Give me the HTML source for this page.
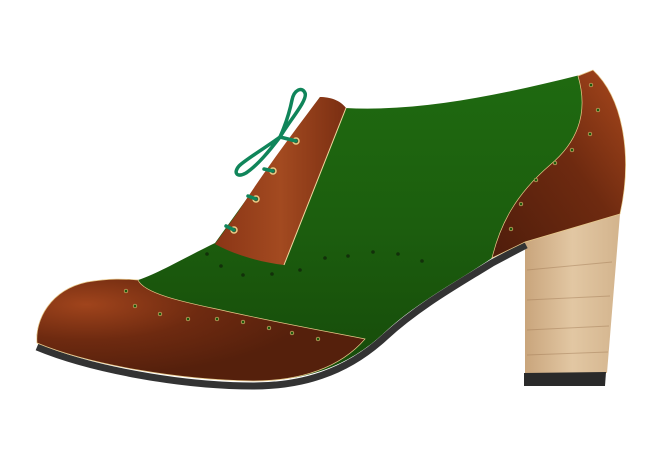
<!DOCTYPE html>
<html><head><meta charset="utf-8"><style>
html,body{margin:0;padding:0;background:#fff;width:660px;height:460px;overflow:hidden}
</style></head><body>
<svg width="660" height="460" viewBox="0 0 660 460" xmlns="http://www.w3.org/2000/svg">
<defs>
<linearGradient id="wood" x1="0" x2="1" y1="0" y2="0">
<stop offset="0" stop-color="#c9a57c"/><stop offset="0.5" stop-color="#e2c7a3"/><stop offset="1" stop-color="#d3b48d"/>
</linearGradient>
<linearGradient id="green" x1="0" x2="0" y1="0" y2="1">
<stop offset="0" stop-color="#1f6a10"/><stop offset="0.5" stop-color="#1c5e0e"/><stop offset="1" stop-color="#164a0a"/>
</linearGradient>
<radialGradient id="toe" cx="0.15" cy="0.25" r="0.7">
<stop offset="0" stop-color="#a0441c"/><stop offset="0.5" stop-color="#6e2a10"/><stop offset="1" stop-color="#55200c"/>
</radialGradient>
<linearGradient id="back" x1="1" x2="0" y1="0" y2="1">
<stop offset="0" stop-color="#a9481c"/><stop offset="0.45" stop-color="#6e2a10"/><stop offset="1" stop-color="#4f1d0b"/>
</linearGradient>
<linearGradient id="eye" x1="0" x2="1">
<stop offset="0" stop-color="#8a3516"/><stop offset="0.5" stop-color="#a34a20"/><stop offset="1" stop-color="#7a2e12"/>
</linearGradient>
</defs>
<!-- heel -->
<path d="M525,242 L620,214 L607,373 L525,373 Z" fill="url(#wood)"/>
<g stroke="#a07a55" stroke-width="1" opacity="0.45">
<line x1="527" y1="270" x2="612" y2="262"/><line x1="527" y1="300" x2="610" y2="296"/><line x1="527" y1="330" x2="609" y2="326"/><line x1="527" y1="355" x2="608" y2="352"/>
</g>
<path d="M524,373 L606,372 L605,386 L524,386 Z" fill="#2a2a2a"/>
<!-- sole -->
<path d="M37,347 C90,369 180,386 253,386 C300,386 345,374 385,337 C420,305 460,283 492,263 L526,245" fill="none" stroke="#333" stroke-width="7" stroke-linejoin="round"/>
<!-- upper green -->
<path d="M138,280 C155,275 190,255 215,243 L320,97 L345,108 C420,112 500,95 580,75 L593,70 C625,100 632,160 620,214 L525,242 L492,258 C460,280 420,300 385,332 C345,370 300,381 253,381 C180,380 90,365 37,343 C35,320 50,290 87,282 C110,278 125,279 138,280 Z" fill="url(#green)"/>
<!-- heel counter brown -->
<path d="M578,76 L593,70 C625,100 632,160 620,214 L525,242 L492,258 C500,225 515,195 550,165 C580,140 588,110 578,76 Z" fill="url(#back)" stroke="#e8c98a" stroke-width="0.7"/>
<!-- eyestay brown -->
<path d="M320,97 C330,97 340,100 346,108 L284,265 C260,262 235,255 215,244 L238,212 C265,170 295,130 320,97 Z" fill="url(#eye)"/>
<path d="M346,108 L284,265" stroke="#f0d8a0" stroke-width="1"/>
<!-- toe cap brown -->
<path d="M138,280 C145,296 200,305 230,312 C290,325 330,332 365,339 C340,368 300,381 253,381 C180,380 90,365 37,343 C35,320 50,290 87,282 C110,278 125,279 138,280 Z" fill="url(#toe)" stroke="#e8c98a" stroke-width="0.7"/>
<!-- perforations -->
<g fill="#12300a">
<circle cx="207" cy="254" r="1.8"/><circle cx="221" cy="266" r="1.8"/><circle cx="243" cy="275" r="1.8"/><circle cx="272" cy="274" r="1.8"/><circle cx="300" cy="270" r="1.8"/><circle cx="325" cy="258" r="1.8"/><circle cx="348" cy="256" r="1.8"/><circle cx="373" cy="252" r="1.8"/><circle cx="398" cy="254" r="1.8"/><circle cx="422" cy="261" r="1.8"/>
</g>
<g fill="#1f5a0d" stroke="#e0b070" stroke-width="0.7">
<circle cx="126" cy="291" r="1.8"/><circle cx="135" cy="306" r="1.8"/><circle cx="160" cy="314" r="1.8"/><circle cx="188" cy="319" r="1.8"/><circle cx="217" cy="319" r="1.8"/><circle cx="243" cy="322" r="1.8"/><circle cx="269" cy="328" r="1.8"/><circle cx="292" cy="333" r="1.8"/><circle cx="318" cy="339" r="1.8"/>
<circle cx="511" cy="229" r="1.8"/><circle cx="521" cy="204" r="1.8"/><circle cx="536" cy="180" r="1.8"/><circle cx="555" cy="163" r="1.8"/><circle cx="572" cy="150" r="1.8"/><circle cx="590" cy="134" r="1.8"/><circle cx="598" cy="110" r="1.8"/><circle cx="591" cy="85" r="1.8"/>
</g>
<!-- eyelets -->
<g fill="#6b2a10" stroke="#e8d08a" stroke-width="1.5">
<circle cx="296" cy="141" r="3"/><circle cx="273" cy="171" r="3"/><circle cx="256" cy="199" r="3"/><circle cx="234" cy="230" r="3"/>
</g>
<!-- laces -->
<g fill="none" stroke="#10855a" stroke-width="3.5" stroke-linecap="round">
<path d="M296,141 L280,137"/><path d="M273,171 L264,169"/><path d="M256,199 L248,196"/><path d="M234,230 L226,226"/>
<path d="M280,137 C290,120 308,100 305,93 C302,86 294,90 292,100 C289,115 284,128 280,137"/>
<path d="M280,137 C265,148 245,160 239,166 C233,173 237,178 246,173 C258,165 270,150 280,137"/>
</g>
</svg>
</body></html>
